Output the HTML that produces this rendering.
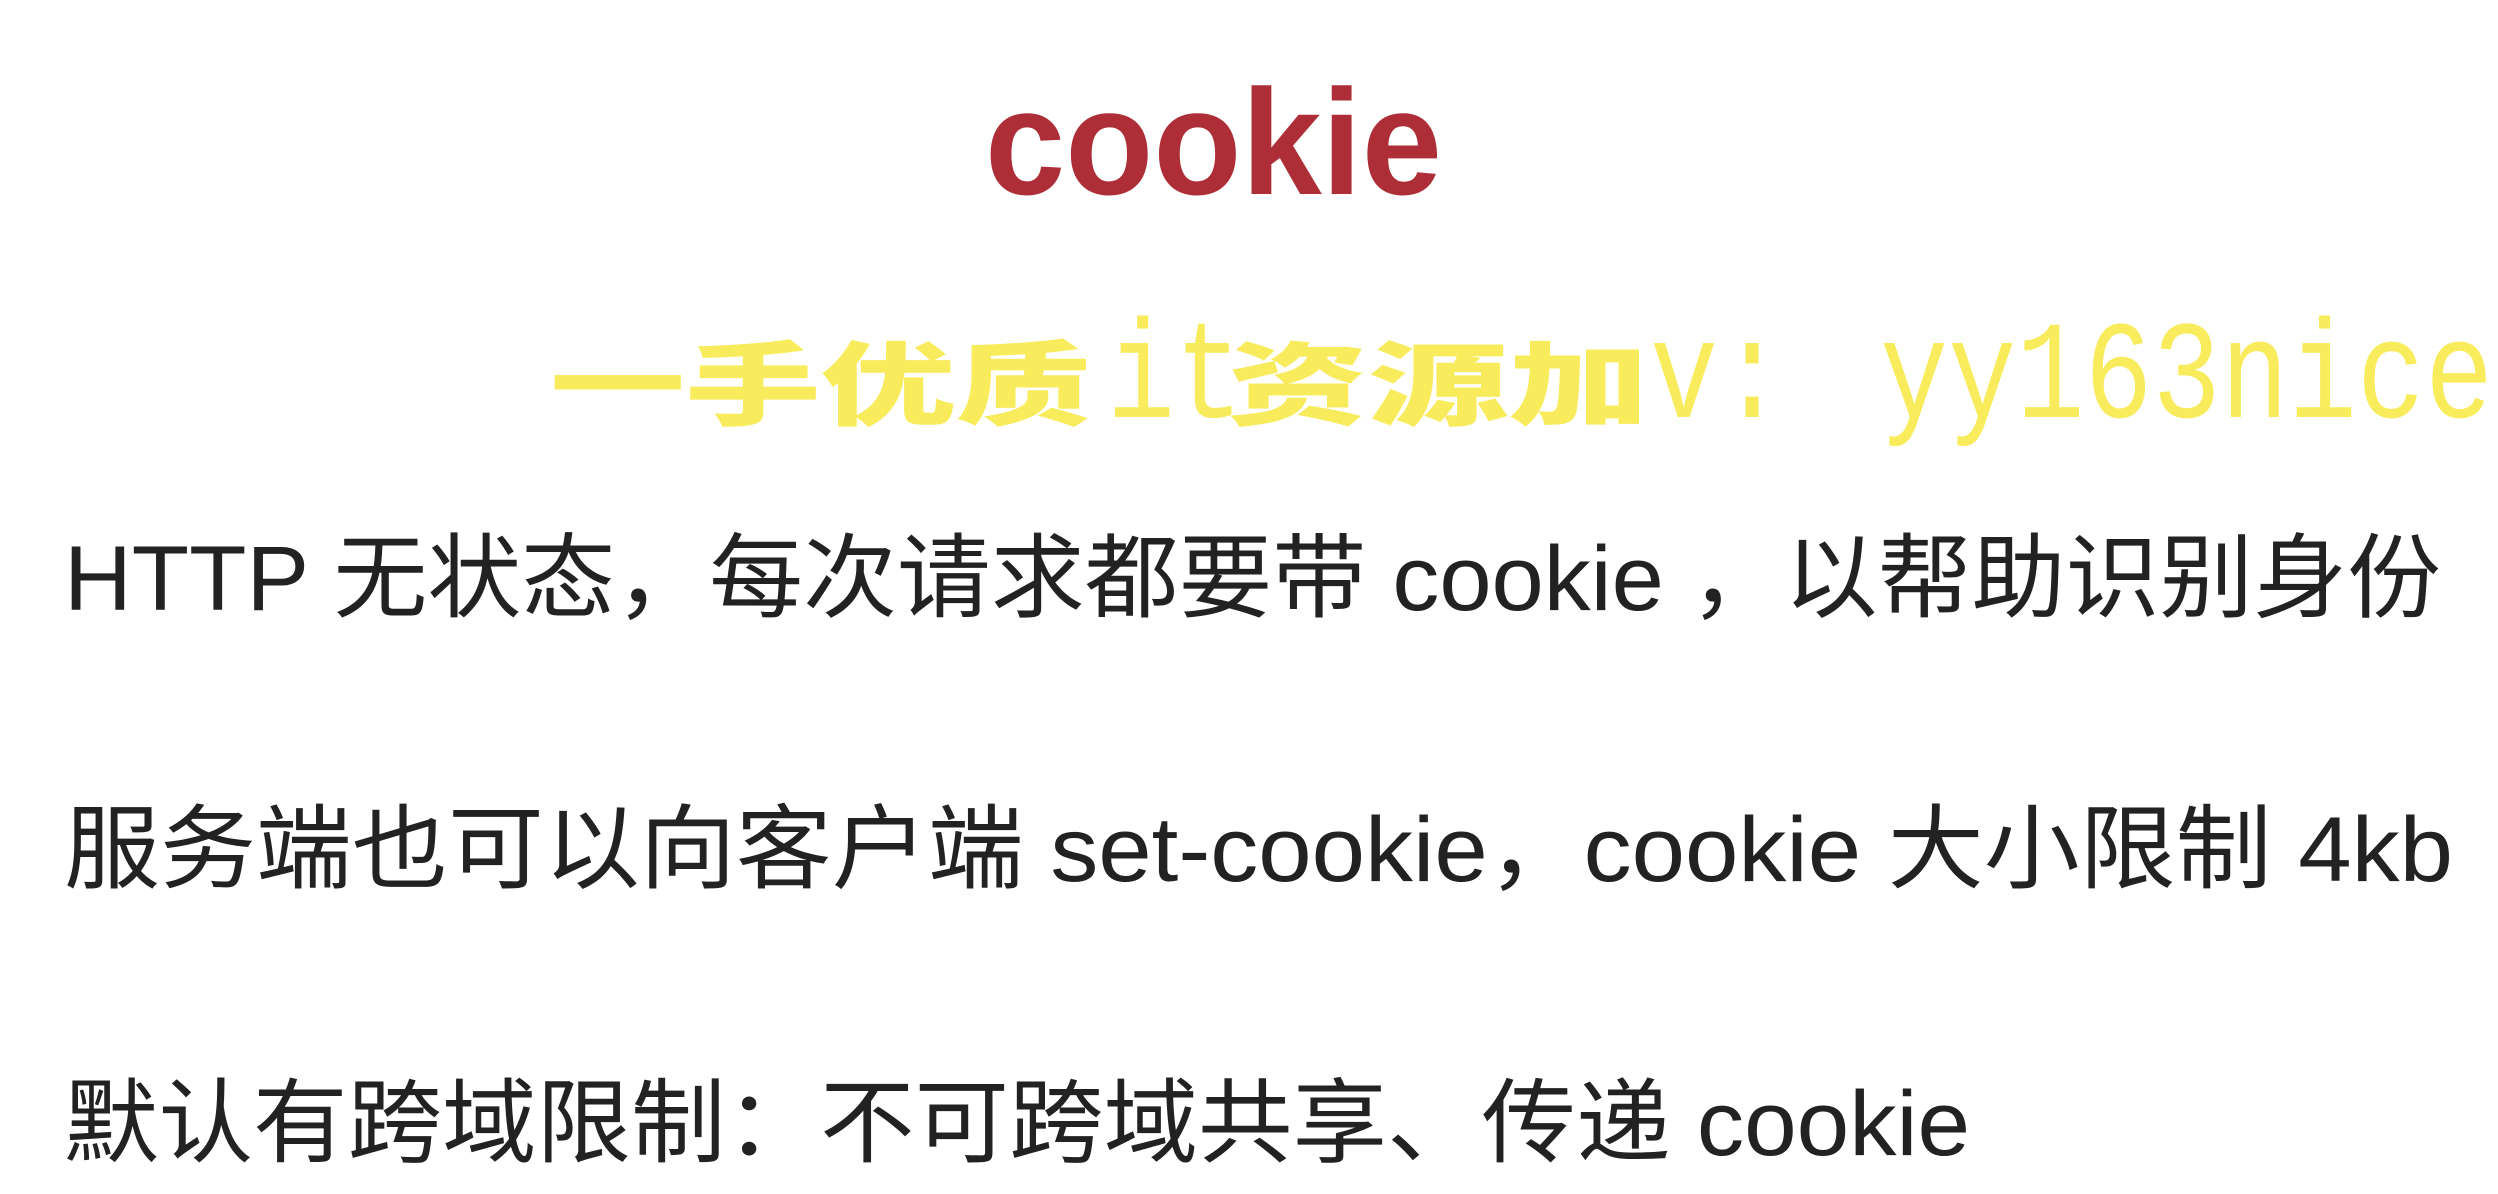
<!DOCTYPE html>
<html><head><meta charset="utf-8"><style>
html,body{margin:0;padding:0;background:#fff;width:2498px;height:1194px;overflow:hidden}
svg{display:block}
</style></head><body>
<svg width="2498" height="1194" viewBox="0 0 2498 1194" xmlns="http://www.w3.org/2000/svg">
<text x="985" y="194" font-family="Liberation Sans, sans-serif" font-weight="bold" font-size="150" fill="#ad2e37" textLength="457" lengthAdjust="spacingAndGlyphs">cookie</text>

<g fill="#f8ec5c">
<g transform="translate(550,418) scale(1,0.68)"><text x="0" y="0" font-family="Noto Sans CJK SC, sans-serif" font-weight="900" font-size="135" textLength="541" lengthAdjust="spacingAndGlyphs">一手优质</text></g>
<g transform="translate(1107,417) scale(0.81,1)"><text x="0" y="0" font-family="Liberation Mono, monospace" font-size="140">it</text></g>
<g transform="translate(1227,418) scale(1,0.68)"><text x="0" y="0" font-family="Noto Sans CJK SC, sans-serif" font-weight="900" font-size="135" textLength="422" lengthAdjust="spacingAndGlyphs">资源加</text></g>
<g transform="translate(1650,417) scale(0.81,1)"><text x="0" y="0" font-family="Liberation Mono, monospace" font-size="140">v:</text></g>
<g transform="translate(1880,417) scale(0.81,1)"><text x="0" y="0" font-family="Liberation Mono, monospace" font-size="140" textLength="757" lengthAdjust="spacingAndGlyphs">yy163nice</text></g>
</g>

<g fill="#222" font-family="Liberation Sans, Noto Sans CJK SC, sans-serif" font-size="92">
<text x="64" y="610" textLength="2377" lengthAdjust="spacingAndGlyphs">HTTP 无状态，每次请求都要带 cookie ，以帮助识别身份</text>
<text x="64" y="881" textLength="2389" lengthAdjust="spacingAndGlyphs">服务端也可以向客户端 set-cookie，cookie 大小限制 4kb</text>
<text x="64" y="1155" textLength="1906" lengthAdjust="spacingAndGlyphs">默认有跨域限制：不可跨域共享、传递 cookie</text>
</g>
</svg>
</body></html>
